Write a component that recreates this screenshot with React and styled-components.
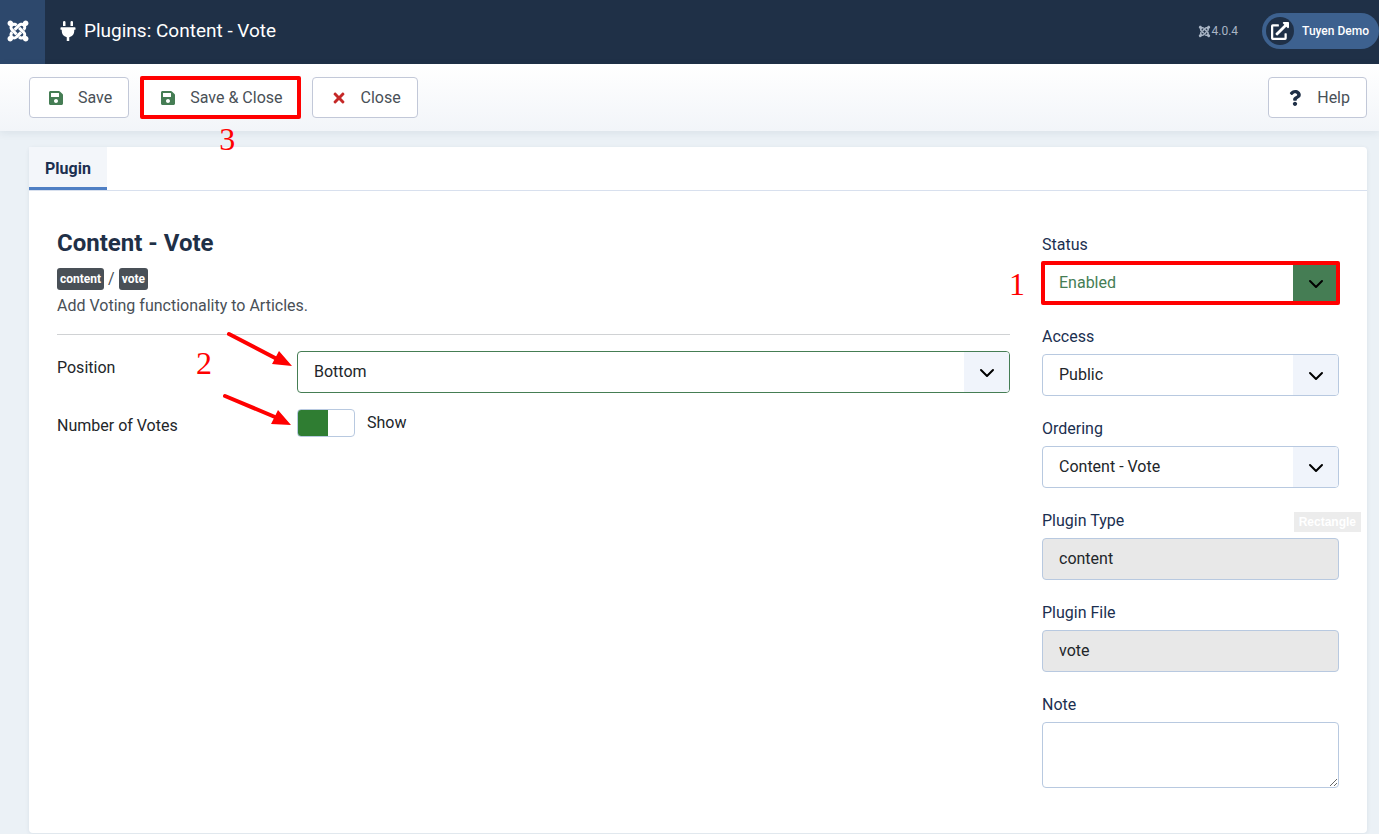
import React from 'react';
import styled, { createGlobalStyle } from 'styled-components';
import {
  FaJoomla,
  FaPlug,
  FaSave,
  FaTimes,
  FaQuestion,
  FaExternalLinkAlt
} from 'react-icons/fa';

function Select({ id, options, tone, value, onChange }) {
  return (
    <SelectWrap>
      <SelectBox id={id} $tone={tone} value={value} onChange={onChange}>
        {options.map(option => (
          <option key={option}>{option}</option>
        ))}
      </SelectBox>
      <Caret $solid={tone === 'enabled'}>
        <svg width="16" height="16" viewBox="0 0 16 16" aria-hidden="true">
          <path
            d="M2 5l6 6 6-6"
            fill="none"
            stroke="#000"
            strokeWidth="2"
            strokeLinecap="round"
            strokeLinejoin="round"
          />
        </svg>
      </Caret>
    </SelectWrap>
  );
}

export default class App extends React.Component {
  constructor(props) {
    super(props);
    this.state = {
      position: 'Bottom',
      votes: true,
      status: 'Enabled',
      access: 'Public',
      ordering: 'Content - Vote',
      note: ''
    };
  }

  onChange(key, e) {
    this.setState({ [key]: e.target.value });
  }

  render() {
    const { position, votes, status, access, ordering, note } = this.state;

    return (
      <Page>
        <GlobalStyle />
        <Header>
          <Logo href="#home" aria-label="Home Dashboard">
            <FaJoomla />
          </Logo>
          <Title>
            <FaPlug />
            Plugins: Content - Vote
          </Title>
          <Version>
            <FaJoomla />
            4.0.4
          </Version>
          <UserLink href="#site">
            <Avatar>
              <FaExternalLinkAlt />
            </Avatar>
            Tuyen Demo
          </UserLink>
        </Header>

        <Toolbar>
          <ToolButton type="button">
            <ToolIcon color="#457d54">
              <FaSave />
            </ToolIcon>
            Save
          </ToolButton>
          <Marked>
            <ToolButton type="button">
              <ToolIcon color="#457d54">
                <FaSave />
              </ToolIcon>
              Save &amp; Close
            </ToolButton>
            <Frame />
            <StepThree>3</StepThree>
          </Marked>
          <ToolButton type="button">
            <ToolIcon color="#c52827">
              <FaTimes />
            </ToolIcon>
            Close
          </ToolButton>
          <Spacer />
          <ToolButton type="button">
            <ToolIcon color="#1f3047">
              <FaQuestion />
            </ToolIcon>
            Help
          </ToolButton>
        </Toolbar>

        <Content>
          <Card>
            <Tabs role="tablist">
              <Tab type="button" role="tab" aria-selected="true">
                Plugin
              </Tab>
            </Tabs>
            <Columns>
              <Main>
                <Heading>Content - Vote</Heading>
                <Badges>
                  <Badge>content</Badge> / <Badge>vote</Badge>
                </Badges>
                <Description>Add Voting functionality to Articles.</Description>
                <Rule />
                <Group>
                  <GroupLabel htmlFor="position">Position</GroupLabel>
                  <Select
                    id="position"
                    tone="valid"
                    options={['Top', 'Bottom']}
                    value={position}
                    onChange={this.onChange.bind(this, 'position')}
                  />
                </Group>
                <Group>
                  <GroupLabel htmlFor="votes">Number of Votes</GroupLabel>
                  <Toggle
                    id="votes"
                    type="checkbox"
                    checked={votes}
                    onChange={e => this.setState({ votes: e.target.checked })}
                  />
                  <ToggleText>{votes ? 'Show' : 'Hide'}</ToggleText>
                </Group>
                <StepTwo>2</StepTwo>
                <Arrows viewBox="0 0 76 100" aria-hidden="true">
                  <path
                    d="M9 4L57 29M5 66L55 87"
                    stroke="#f00"
                    strokeWidth="4"
                    strokeLinecap="round"
                  />
                  <path
                    d="M72 36L59 21L52 34ZM71 95L58 80L51 94Z"
                    fill="#f00"
                  />
                </Arrows>
              </Main>

              <Aside>
                <Field>
                  <Label htmlFor="status">Status</Label>
                  <Marked>
                    <Select
                      id="status"
                      tone="enabled"
                      options={['Enabled', 'Disabled']}
                      value={status}
                      onChange={this.onChange.bind(this, 'status')}
                    />
                    <Frame />
                    <StepOne>1</StepOne>
                  </Marked>
                </Field>
                <Field>
                  <Label htmlFor="access">Access</Label>
                  <Select
                    id="access"
                    options={['Public', 'Guest', 'Registered', 'Special']}
                    value={access}
                    onChange={this.onChange.bind(this, 'access')}
                  />
                </Field>
                <Field>
                  <Label htmlFor="ordering">Ordering</Label>
                  <Select
                    id="ordering"
                    options={['Content - Vote']}
                    value={ordering}
                    onChange={this.onChange.bind(this, 'ordering')}
                  />
                </Field>
                <Field>
                  <Label htmlFor="type">Plugin Type</Label>
                  <Input id="type" value="content" readOnly />
                  <Hint>Rectangle</Hint>
                </Field>
                <Field>
                  <Label htmlFor="file">Plugin File</Label>
                  <Input id="file" value="vote" readOnly />
                </Field>
                <Field>
                  <Label htmlFor="note">Note</Label>
                  <Note
                    id="note"
                    value={note}
                    onChange={this.onChange.bind(this, 'note')}
                  />
                </Field>
              </Aside>
            </Columns>
          </Card>
        </Content>
      </Page>
    );
  }
}

const GlobalStyle = createGlobalStyle`
  * {
    box-sizing: border-box;
  }

  body {
    margin: 0;
    background: #ebf1f6;
    color: #495057;
    font: 400 16px/24px Roboto, sans-serif;
  }

  button,
  input,
  select,
  textarea {
    font: inherit;
  }
`;

const Page = styled.div`
  min-height: 100vh;
`;

const Header = styled.header`
  display: flex;
  align-items: center;
  height: 64px;
  background: #1f3047;
  color: #fff;
`;

const Logo = styled.a`
  display: flex;
  align-items: center;
  align-self: stretch;
  width: 45px;
  padding: 0 0 2px 6px;
  background: #2d486c;
  color: #fff;
  font-size: 24px;
`;

const Title = styled.h1`
  display: flex;
  align-items: center;
  gap: 6px;
  margin: 0 auto 3px 13px;
  font-size: 19px;
  font-weight: 400;

  svg {
    width: 20px;
    height: 20px;
  }
`;

const Version = styled.div`
  display: flex;
  align-items: center;
  gap: 1px;
  margin: 0 24px 2px 0;
  color: #a9b5c5;
  font-size: 12px;

  svg {
    width: 13px;
    height: 13px;
  }
`;

const UserLink = styled.a`
  display: flex;
  align-items: center;
  gap: 8px;
  height: 36px;
  margin-bottom: 2px;
  padding: 0 10px 0 4px;
  border-radius: 18px;
  background: #3d618f;
  color: #fff;
  font-size: 12px;
  font-weight: 500;
  text-decoration: none;
`;

const Avatar = styled.span`
  display: flex;
  align-items: center;
  justify-content: center;
  width: 28px;
  height: 28px;
  border-radius: 50%;
  background: #1f3047;
  font-size: 18px;
`;

const Toolbar = styled.div`
  position: relative;
  display: flex;
  gap: 12px;
  padding: 13px 12px 13px 29px;
  background: linear-gradient(#fff, #f2f5f9);
  box-shadow: 0 2px 8px rgba(31, 48, 71, 0.08);
`;

const ToolButton = styled.button`
  display: flex;
  align-items: center;
  gap: 12px;
  height: 41px;
  padding: 0 16px;
  border: 1px solid #c2c8d8;
  border-radius: 4px;
  background: #fff;
  color: #495057;
`;

const ToolIcon = styled.span`
  display: flex;
  justify-content: center;
  width: 20px;
  color: ${p => p.color};
`;

const Spacer = styled.div`
  flex: 1;
`;

const Marked = styled.div`
  position: relative;
`;

const Frame = styled.span`
  position: absolute;
  inset: -1px;
  border: 4px solid #f00;
  border-radius: 2px;
  pointer-events: none;
`;

const Step = styled.span`
  position: absolute;
  color: #f00;
  font: 32px/32px 'Liberation Serif', serif;
`;

const StepOne = styled(Step)`
  top: 6px;
  left: -33px;
`;

const StepTwo = styled(Step)`
  top: 118px;
  left: 139px;
`;

const StepThree = styled(Step)`
  top: 46px;
  left: 78px;
`;

const Content = styled.main`
  padding: 16px 12px 0 29px;
`;

const Card = styled.section`
  border-radius: 4px;
  background: #fff;
  box-shadow: 0 1px 4px rgba(31, 48, 71, 0.08);
`;

const Tabs = styled.div`
  display: flex;
  height: 44px;
  border-bottom: 1px solid #d8e0ee;
`;

const Tab = styled.button`
  padding: 3px 16px 0;
  border: 0;
  border-bottom: 3px solid #4f7fc4;
  background: #f3f6fa;
  color: #1b2f50;
  font-weight: 700;
`;

const Columns = styled.div`
  display: grid;
  grid-template-columns: minmax(0, 1fr) 297px;
  gap: 32px;
  padding: 38px 28px 45px;
`;

const Main = styled.div`
  position: relative;
`;

const Heading = styled.h2`
  margin: 0 0 10px;
  color: #1f3047;
  font-size: 24px;
  font-weight: 700;
  line-height: 28px;
`;

const Badges = styled.div`
  display: flex;
  align-items: center;
  gap: 4px;
  height: 24px;
`;

const Badge = styled.span`
  padding: 0 3px;
  border-radius: 3px;
  background: #495057;
  color: #fff;
  font-size: 12px;
  font-weight: 700;
  line-height: 22px;
`;

const Description = styled.p`
  margin: 3px 0 0;
`;

const Rule = styled.hr`
  height: 1px;
  margin: 16px 0;
  border: 0;
  background: #d0d2d4;
`;

const Group = styled.div`
  display: flex;
  margin-bottom: 16px;
`;

const GroupLabel = styled.label`
  flex: 0 0 240px;
  padding-top: 5px;
  color: #22262a;
`;

const SelectWrap = styled.div`
  position: relative;
  flex: 1;
`;

const SelectBox = styled.select`
  appearance: none;
  display: block;
  width: 100%;
  height: 42px;
  padding: 0 56px 0 16px;
  border: 1px solid ${p => (p.$tone ? '#457d54' : '#b8c9e0')};
  border-radius: 4px;
  background: #fff;
  color: ${p => (p.$tone === 'enabled' ? '#457d54' : '#22262a')};
`;

const Caret = styled.span`
  position: absolute;
  top: 1px;
  right: 1px;
  bottom: 1px;
  display: flex;
  align-items: center;
  justify-content: center;
  width: 45px;
  padding-top: 2px;
  border-radius: 0 3px 3px 0;
  background: ${p => (p.$solid ? '#457d54' : '#f0f4fb')};
  pointer-events: none;
`;

const Toggle = styled.input`
  appearance: none;
  width: 58px;
  height: 28px;
  margin: 0 12px 0 0;
  border: 1px solid #b8c9e0;
  border-radius: 4px;
  background: ${p =>
    p.checked
      ? 'linear-gradient(to right, #2f7d32 30px, #fff 30px)'
      : 'linear-gradient(to right, #fff 26px, #b8c9e0 26px)'};
`;

const ToggleText = styled.span`
  padding-top: 2px;
  color: #22262a;
`;

const Arrows = styled.svg`
  position: absolute;
  top: 101px;
  left: 163px;
  width: 76px;
  height: 100px;
`;

const Aside = styled.aside`
  display: flex;
  flex-direction: column;
  gap: 21px;
  padding-top: 4px;
`;

const Field = styled.div`
  position: relative;
  display: flex;
  flex-direction: column;
  gap: 5px;
`;

const Label = styled.label`
  color: #1b2f50;
`;

const Input = styled.input`
  width: 100%;
  height: 42px;
  padding: 0 16px 2px;
  border: 1px solid #b8c9e0;
  border-radius: 4px;
  background: #e8e8e8;
  color: #22262a;
`;

const Note = styled.textarea`
  width: 100%;
  height: 66px;
  padding: 8px 16px;
  border: 1px solid #b8c9e0;
  border-radius: 4px;
  background: #fff;
  color: #22262a;
`;

const Hint = styled.span`
  position: absolute;
  top: 3px;
  right: -22px;
  padding: 0 5px;
  background: #ececec;
  color: #fff;
  font: bold 12px/20px 'Liberation Sans', sans-serif;
`;
